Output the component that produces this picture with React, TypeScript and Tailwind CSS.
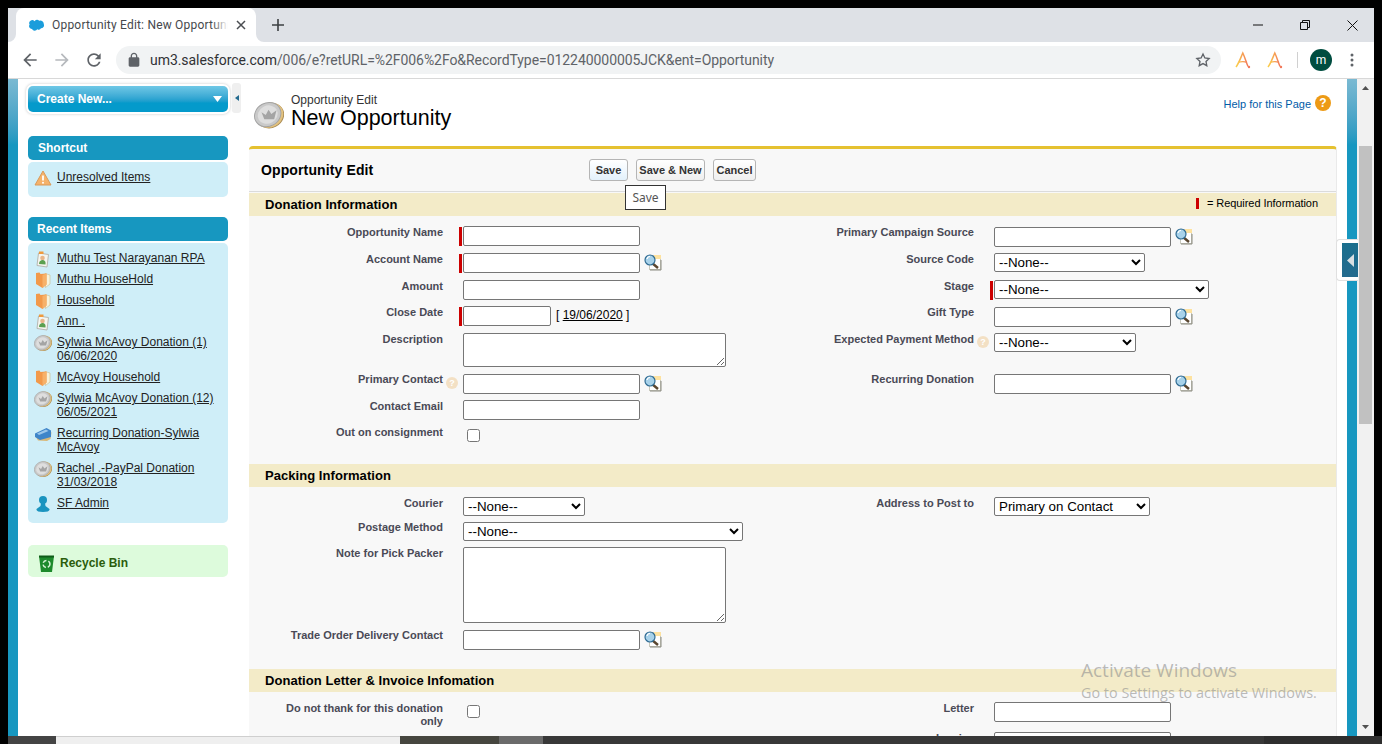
import React from "react";

const SANS = "font-['Liberation_Sans',Arial,sans-serif]";

function Lookup() {
  return (
    <svg width="18" height="17" viewBox="0 0 18 17" className="shrink-0 ml-[4px] mt-[1px]">
      <rect x="5.5" y="1.5" width="11" height="14" fill="#fff" stroke="#c8c8bc" />
      <rect x="10" y="1" width="7" height="4" fill="#fde2a0" />
      <path d="M6 16h11V6" fill="none" stroke="#8a8a80" />
      <path d="M8 9l6 5" stroke="#5a4630" strokeWidth="2.4" />
      <circle cx="6" cy="6" r="5" fill="#a8d2ea" stroke="#2f6b93" strokeWidth="1.2" />
      <path d="M3 5a3 3 0 0 1 3-2.5" stroke="#fff" strokeWidth="1.2" fill="none" />
    </svg>
  );
}

function Help({ className = "" }: { className?: string }) {
  return (
    <span className={"w-[12px] h-[12px] mt-[3px] rounded-full bg-[#f3e0c4] text-white text-[9px] font-bold leading-[12px] text-center shrink-0 " + className}>?</span>
  );
}

function Coin({ size = 18 }: { size?: number }) {
  return (
    <svg width={size} height={size} viewBox="0 0 32 32">
      <g transform="rotate(-28 16 16)">
        <ellipse cx="17" cy="17.5" rx="15" ry="13" fill="#a98a52" />
        <ellipse cx="16.5" cy="16.5" rx="15" ry="13" fill="#e3c27f" />
        <ellipse cx="15" cy="15" rx="14.5" ry="12.5" fill="#c9c9c9" stroke="#a3a3a3" />
        <ellipse cx="15" cy="15" rx="11" ry="9.5" fill="#dedede" />
      </g>
      <path d="M8 13l4.500 3 3-5.500 3 4.500 5.500-4-2.500 9.500H11z" fill="#a4a4a4" />
    </svg>
  );
}

function ContactIcon() {
  return (
    <svg width="18" height="18" viewBox="0 0 18 18">
      <path d="M4.500 3l10 1.500-1.500 12.500-10-1.500z" fill="#f5f5ef" stroke="#b7b7b0" />
      <path d="M5 1.500h4.500V4H5z" fill="#ef9a3c" />
      <circle cx="8.500" cy="8" r="2.300" fill="#e8b689" />
      <path d="M5 14c0-3 2-4 3.500-4S12 11 11.500 14.500z" fill="#5aa050" />
    </svg>
  );
}

function FolderIcon() {
  return (
    <svg width="18" height="18" viewBox="0 0 18 18">
      <path d="M11 2.500l5 1.500v9l-4.500 3.500z" fill="#f7f3dc" stroke="#c9b98c" strokeWidth="0.6" />
      <path d="M2 2l3.500-.5 1 1.500 6-.5v11L8.500 17 2 13z" fill="#f2994a" />
      <path d="M12.500 2.500v11L8.500 17V4z" fill="#f7b169" />
    </svg>
  );
}

function CardIcon() {
  return (
    <svg width="18" height="18" viewBox="0 0 18 18">
      <path d="M1 10.500L13 4.500l4.500 3-1 6.500-3.500 2-9-.5z" fill="#d9b878" />
      <path d="M1 8.500L12.500 3l4.500 2.500v6.500l-11 3L1 12z" fill="#3f85c9" />
      <path d="M3 8.500l9-4 2.500 1.500L5 10z" fill="#9cc6ea" />
    </svg>
  );
}

function PersonIcon() {
  return (
    <svg width="18" height="18" viewBox="0 0 18 18">
      <circle cx="9" cy="5" r="4" fill="#1b94bf" />
      <path d="M7 8h4l.5 3 4 3c.5 2-2 3-6.500 3S2 16 2.500 14l4-3z" fill="#1b94bf" />
    </svg>
  );
}

function Row({ h, children }: { h: string; children: React.ReactNode }) {
  return <div className={"flex shrink-0 " + h}>{children}</div>;
}

function Cell({
  side,
  label,
  req,
  help,
  up,
  children,
}: {
  side: "l" | "r";
  label?: React.ReactNode;
  req?: boolean;
  help?: boolean;
  up?: boolean;
  children?: React.ReactNode;
}) {
  return (
    <div className={"flex " + (side === "l" ? "w-[544px]" : "w-[543px]")}>
      <div className={"text-right text-[11px] leading-[13px] font-bold text-[#4a4a56] shrink-0 " + (side === "l" ? "w-[194px] " : "w-[181px] ") + (up ? "-mt-[1px]" : "")}>
        {label}
      </div>
      <div className="w-[20px] shrink-0 flex justify-end">
        {help && <Help className="mr-auto ml-[3px]" />}
        {req && <span className="w-[3px] h-[19px] mt-[1px] mr-[1px] bg-[#c00]" />}
      </div>
      <div className="flex items-start">{children}</div>
    </div>
  );
}

function TextBox({ w = "w-[177px]" }: { w?: string }) {
  return <input type="text" className={"h-[20px] bg-white border border-[#767676] rounded-[2px] " + w} />;
}

function Pick({ w, v = "--None--" }: { w: string; v?: string }) {
  return (
    <select defaultValue={v} className={"h-[19px] bg-white border border-[#767676] rounded-[2px] text-[13.33px] text-black " + w}>
      <option>{v}</option>
    </select>
  );
}

function Check({ mt }: { mt: string }) {
  return <input type="checkbox" className={"w-[13px] h-[13px] ml-[4px] " + mt} />;
}

function Section({ title, children }: { title: string; children?: React.ReactNode }) {
  return (
    <div className="h-[23px] shrink-0 bg-[#f3ebc8] pl-[16px] pr-[18px] flex items-center justify-between">
      <span className="text-[13px] font-bold text-black tracking-[0.05px]">{title}</span>
      {children}
    </div>
  );
}

function Btn({ children, w, hover }: { children: React.ReactNode; w: string; hover?: boolean }) {
  return (
    <button className={"h-[22px] border border-[#b5b5b5] rounded-[3px] text-[11px] font-bold text-[#333] bg-gradient-to-b from-white " + (hover ? "to-[#e3f1fb] " : "to-[#efefef] ") + w}>
      {children}
    </button>
  );
}

function Recent({ icon, children }: { icon: React.ReactNode; children: React.ReactNode }) {
  return (
    <div className="flex gap-[5px] mb-[7px]">
      <span className="w-[18px] h-[14px] shrink-0 flex items-start -mt-[1px]">{icon}</span>
      <a className="underline text-[12px] leading-[14px] text-[#222] w-[162px]">{children}</a>
    </div>
  );
}

function ExtA({ id }: { id: string }) {
  return (
    <svg width="18" height="18" viewBox="0 0 18 18" fill="none">
      <defs>
        <linearGradient id={id} x1="0" y1="0" x2="1" y2="0">
          <stop offset="0" stopColor="#fbd04a" />
          <stop offset="1" stopColor="#f2785a" />
        </linearGradient>
      </defs>
      <path d="M2 16C5 12 7 6 8.800 2c2 4 3.500 10 5.200 13.500" stroke={`url(#${id})`} strokeWidth="1.500" />
      <path d="M4 11.500c3 -1.200 6-1.200 9-.2" stroke={`url(#${id})`} strokeWidth="1.200" />
      <circle cx="15" cy="16" r="1.200" fill="#f2785a" />
    </svg>
  );
}

export default function App() {
  return (
    <div className={"relative w-[1382px] h-[744px] bg-black overflow-hidden flex flex-col pt-[8px] " + SANS}>
      <div className="flex-1 min-h-0 mx-[8px] flex flex-col">
        {/* tab strip */}
        <div className="h-[34px] shrink-0 bg-[#dee1e6] flex items-center text-[#3c4043]">
          <div className="relative ml-[8px] w-[240px] h-[34px] bg-white rounded-t-[8px] flex items-center font-['Roboto',sans-serif]">
            <svg width="8" height="8" viewBox="0 0 8 8" className="absolute -left-[8px] bottom-0"><path d="M8 0v8H0a8 8 0 0 0 8-8z" fill="#fff" /></svg>
            <svg width="8" height="8" viewBox="0 0 8 8" className="absolute -right-[8px] bottom-0"><path d="M0 0v8h8a8 8 0 0 1-8-8z" fill="#fff" /></svg>
            <svg width="16" height="12" viewBox="0 0 16 12" className="ml-[12px] shrink-0">
              <path d="M6.500 2.200A3 3 0 0 1 11.200 1.800 3.400 3.400 0 0 1 15.800 5.200 3 3 0 0 1 13 9.300 2.600 2.600 0 0 1 9.300 10.200 3 3 0 0 1 4 10 2.800 2.800 0 0 1 1.600 5.600 3 3 0 0 1 6.500 2.200z" fill="#1b9ddb" />
            </svg>
            <span className="ml-[8px] text-[12px] tracking-[0.2px] whitespace-nowrap overflow-hidden w-[176px] text-[#45484c]">Opportunity Edit: New Opportunity</span>
            <span className="absolute left-[196px] top-0 w-[16px] h-[34px] bg-gradient-to-r from-transparent to-white" />
            <svg width="10" height="10" viewBox="0 0 10 10" className="ml-[8px] shrink-0"><path d="M1 1l8 8M9 1l-8 8" stroke="#4a4d51" strokeWidth="1.500" /></svg>
          </div>
          <svg width="12" height="12" viewBox="0 0 12 12" className="ml-[16px] shrink-0"><path d="M6 0v12M0 6h12" stroke="#3c4043" strokeWidth="1.600" /></svg>
          <div className="ml-auto flex items-center pr-[16px] gap-[36px] text-[#222]">
            <svg width="10" height="10" viewBox="0 0 10 10"><path d="M0 5h10" stroke="#111" strokeWidth="1" /></svg>
            <svg width="10" height="10" viewBox="0 0 10 10" fill="none" className="ml-[1px]"><path d="M.5 2.500h7v7h-7zM2.500 2.500v-2h7v7h-2" stroke="#111" /></svg>
            <svg width="11" height="11" viewBox="0 0 11 11" className="ml-[1px]"><path d="M.5.500l10 10M10.500.500l-10 10" stroke="#111" /></svg>
          </div>
        </div>
        {/* toolbar */}
        <div className="h-[37px] shrink-0 bg-white border-b border-[#d8d8d8] flex items-start pt-[4px] font-['Roboto',sans-serif]">
          <div className="w-[108px] h-[28px] flex items-center shrink-0">
            <svg width="20" height="20" viewBox="0 0 24 24" className="ml-[12px]"><path fill="#5f6368" d="M20 11H7.830l5.590-5.590L12 4l-8 8 8 8 1.410-1.410L7.830 13H20v-2z" /></svg>
            <svg width="20" height="20" viewBox="0 0 24 24" className="ml-[12px]"><path fill="#b6b9bd" d="M12 4l-1.410 1.410L16.170 11H4v2h12.170l-5.580 5.590L12 20l8-8z" /></svg>
            <svg width="20" height="20" viewBox="0 0 24 24" className="ml-[12px]"><path fill="#5f6368" d="M17.650 6.350C16.200 4.900 14.210 4 12 4c-4.420 0-7.990 3.580-7.990 8s3.570 8 7.990 8c3.730 0 6.840-2.550 7.730-6h-2.080c-.82 2.330-3.040 4-5.650 4-3.310 0-6-2.690-6-6s2.690-6 6-6c1.660 0 3.140.69 4.220 1.780L13 11h7V4l-2.350 2.350z" /></svg>
          </div>
          <div className="w-[1105px] h-[28px] rounded-full bg-[#f1f3f4] flex items-center shrink-0">
            <svg width="16" height="16" viewBox="0 0 24 24" className="ml-[10px] shrink-0"><path fill="#5f6368" d="M18 8h-1V6c0-2.760-2.240-5-5-5S7 3.240 7 6v2H6c-1.100 0-2 .9-2 2v10c0 1.100.9 2 2 2h12c1.100 0 2-.9 2-2V10c0-1.100-.9-2-2-2zM9 8V6c0-1.660 1.340-3 3-3s3 1.340 3 3v2H9z" /></svg>
            <span className="ml-[8px] text-[14px] text-[#5f6368] whitespace-nowrap tracking-[-0.06px]"><span className="text-[#303134]">um3.salesforce.com</span>/006/e?retURL=%2F006%2Fo&amp;RecordType=012240000005JCK&amp;ent=Opportunity</span>
            <svg width="16" height="16" viewBox="0 0 24 24" fill="none" stroke="#5f6368" strokeWidth="2" className="ml-auto mr-[10px] shrink-0"><path d="M12 3l2.800 5.900 6.400.8-4.700 4.400 1.200 6.400L12 17.400l-5.700 3.100 1.200-6.400L2.800 9.700l6.400-.8z" /></svg>
          </div>
          <div className="flex items-center h-[28px] ml-[13px]">
            <ExtA id="a1" />
            <span className="ml-[14px]"><ExtA id="a2" /></span>
            <span className="ml-[13px] w-px h-[16px] bg-[#d0d0d0]" />
            <span className="ml-[12px] w-[22px] h-[22px] rounded-full bg-[#004d40] text-white text-[12px] flex items-center justify-center">m</span>
            <svg width="4" height="14" viewBox="0 0 4 14" className="ml-[18px]"><circle cx="2" cy="2" r="1.500" fill="#5f6368" /><circle cx="2" cy="7" r="1.500" fill="#5f6368" /><circle cx="2" cy="12" r="1.500" fill="#5f6368" /></svg>
          </div>
        </div>
        {/* page */}
        <div className="relative flex-1 min-h-0 flex bg-white overflow-hidden">
          <div className="w-[10px] shrink-0 bg-[#1797c0] bg-gradient-to-b from-[#7ab9d2] via-[#1797c0] via-[10%] to-[#1797c0]" />
          {/* sidebar */}
          <div className="w-[231px] shrink-0 pl-[10px] pr-[21px] pt-[7px]">
            <div className="h-[26px] rounded-[5px] bg-gradient-to-b from-[#6fc8e6] to-[#049acb] to-[65%] shadow-[0_0_0_2px_#fff,0_0_3px_2px_#c8c8c8] flex items-center justify-between pl-[9px] pr-[6px] text-white text-[12px] font-bold">
              <span>Create New...</span>
              <svg width="9" height="6" viewBox="0 0 9 6"><path d="M0 0h9L4.500 6z" fill="#fff" /></svg>
            </div>
            <div className="mt-[24px] h-[24px] rounded-[5px] bg-[#1797c0] text-white text-[12px] font-bold flex items-center pl-[10px]">Shortcut</div>
            <div className="mt-[2px] h-[35px] rounded-[5px] bg-[#cfeef8] flex items-start gap-[5px] pl-[6px] pt-[8px]">
              <svg width="18" height="16" viewBox="0 0 18 16"><path d="M9 1l8 14H1z" fill="#f5b26b" stroke="#d99a5a" /><path d="M9 5.500v5" stroke="#fff" strokeWidth="1.800" /><circle cx="9" cy="12.700" r="1" fill="#fff" /></svg>
              <a className="underline text-[12px] leading-[14px] text-[#222]">Unresolved Items</a>
            </div>
            <div className="mt-[20px] h-[24px] rounded-[5px] bg-[#1797c0] text-white text-[12px] font-bold flex items-center pl-[9px]">Recent Items</div>
            <div className="mt-[2px] h-[280px] rounded-[5px] bg-[#cfeef8] pl-[6px] pt-[8px]">
              <Recent icon={<ContactIcon />}>Muthu Test Narayanan RPA</Recent>
              <Recent icon={<FolderIcon />}>Muthu HouseHold</Recent>
              <Recent icon={<FolderIcon />}>Household</Recent>
              <Recent icon={<ContactIcon />}>Ann .</Recent>
              <Recent icon={<Coin />}>Sylwia McAvoy Donation (1) 06/06/2020</Recent>
              <Recent icon={<FolderIcon />}>McAvoy Household</Recent>
              <Recent icon={<Coin />}>Sylwia McAvoy Donation (12) 06/05/2021</Recent>
              <Recent icon={<CardIcon />}>Recurring Donation-Sylwia McAvoy</Recent>
              <Recent icon={<Coin />}>Rachel .-PayPal Donation 31/03/2018</Recent>
              <Recent icon={<PersonIcon />}>SF Admin</Recent>
            </div>
            <div className="mt-[22px] h-[32px] rounded-[5px] bg-[#ddfbdc] flex items-center pl-[10px] pt-[4px] gap-[5px]">
              <svg width="17" height="18" viewBox="0 0 17 18"><path d="M1 2h15l-2 16H3z" fill="#1d8a2c" /><path d="M1 1.500h15v2H1z" fill="#0e5c18" /><circle cx="8.500" cy="10" r="3.500" fill="none" stroke="#d9f3d9" strokeWidth="1.500" strokeDasharray="4 2" /></svg>
              <span className="text-[12px] font-bold text-[#2b5d0c]">Recycle Bin</span>
            </div>
          </div>
          {/* main */}
          <div className="w-[1088px] shrink-0 flex flex-col min-h-0">
            <div className="h-[67px] shrink-0 flex items-start pl-[5px] pt-[15px]">
              <span className="mt-[6px] shrink-0"><Coin size={30} /></span>
              <div className="ml-[7px]">
                <div className="text-[12px] leading-[13px] text-[#333]">Opportunity Edit</div>
                <div className="text-[21.5px] leading-[22px] text-black">New Opportunity</div>
              </div>
              <div className="ml-auto mr-[6px] flex items-center gap-[4px]">
                <span className="text-[11px] mt-[2px] text-[#015ba7]">Help for this Page</span>
                <span className="w-[16px] h-[16px] rounded-full bg-[#ed9a15] text-white text-[12px] font-bold leading-[16px] text-center">?</span>
              </div>
            </div>
            <div className="flex-1 min-h-0 flex flex-col bg-[#f8f8f8] border-t-[3px] border-r border-r-[#eaeaea] border-t-[#e5c130] rounded-t-[4px]">
              <div className="h-[43px] mb-[1px] shrink-0 border-b border-[#dbdbdb] flex items-center pl-[12px]">
                <span className="w-[328px] text-[14px] font-bold text-black tracking-[0.12px]">Opportunity Edit</span>
                <div className="flex gap-[8px]">
                  <Btn w="w-[39px]" hover>Save</Btn>
                  <Btn w="w-[69px]">Save &amp; New</Btn>
                  <Btn w="w-[43px]">Cancel</Btn>
                </div>
              </div>
              <Section title="Donation Information">
                <span className="flex items-center gap-[8px] -mt-[2px] text-[11px] tracking-[-0.05px] text-black">
                  <span className="w-[3px] h-[11px] bg-[#c00]" />= Required Information
                </span>
              </Section>
              <div className="h-[10px] shrink-0" />
              <Row h="h-[27px]">
                <Cell side="l" label="Opportunity Name" req><TextBox /></Cell>
                <Cell side="r" label="Primary Campaign Source"><span className="mt-[1px] flex"><TextBox /><Lookup /></span></Cell>
              </Row>
              <Row h="h-[27px]">
                <Cell side="l" label="Account Name" req><TextBox /><Lookup /></Cell>
                <Cell side="r" label="Source Code"><Pick w="w-[151px]" /></Cell>
              </Row>
              <Row h="h-[26px]">
                <Cell side="l" label="Amount"><TextBox /></Cell>
                <Cell side="r" label="Stage" req><Pick w="w-[215px]" /></Cell>
              </Row>
              <Row h="h-[27px]">
                <Cell side="l" label="Close Date" req>
                  <TextBox w="w-[88px]" />
                  <span className="ml-[5px] mt-[2px] text-[12px] leading-[14px] text-black whitespace-nowrap">[ <a className="underline">19/06/2020</a> ]</span>
                </Cell>
                <Cell side="r" label="Gift Type"><span className="mt-[1px] flex"><TextBox /><Lookup /></span></Cell>
              </Row>
              <Row h="h-[41px]">
                <Cell side="l" label="Description"><textarea className="w-[263px] h-[34px] bg-white border border-[#767676] rounded-[2px]" /></Cell>
                <Cell side="r" label="Expected Payment Method" help><Pick w="w-[142px]" /></Cell>
              </Row>
              <Row h="h-[26px]">
                <Cell side="l" label="Primary Contact" help up><TextBox /><Lookup /></Cell>
                <Cell side="r" label="Recurring Donation" up><TextBox /><Lookup /></Cell>
              </Row>
              <Row h="h-[27px]">
                <Cell side="l" label="Contact Email"><TextBox /></Cell>
                <Cell side="r" />
              </Row>
              <Row h="h-[37px]">
                <Cell side="l" label="Out on consignment" up><Check mt="mt-[2px]" /></Cell>
                <Cell side="r" />
              </Row>
              <Section title="Packing Information" />
              <div className="h-[10px] shrink-0" />
              <Row h="h-[25px]">
                <Cell side="l" label="Courier"><Pick w="w-[122px]" /></Cell>
                <Cell side="r" label="Address to Post to"><Pick w="w-[156px]" v="Primary on Contact" /></Cell>
              </Row>
              <Row h="h-[25px]">
                <Cell side="l" label="Postage Method" up><Pick w="w-[280px]" /></Cell>
                <Cell side="r" />
              </Row>
              <Row h="h-[83px]">
                <Cell side="l" label="Note for Pick Packer"><textarea className="w-[263px] h-[76px] bg-white border border-[#767676] rounded-[2px]" /></Cell>
                <Cell side="r" />
              </Row>
              <Row h="h-[39px]">
                <Cell side="l" label="Trade Order Delivery Contact" up><TextBox /><Lookup /></Cell>
                <Cell side="r" />
              </Row>
              <Section title="Donation Letter & Invoice Infomation" />
              <div className="h-[10px] shrink-0" />
              <Row h="h-[30px]">
                <Cell side="l" label={<>Do not thank for this donation<br />only</>}><Check mt="mt-[3px]" /></Cell>
                <Cell side="r" label="Letter"><TextBox /></Cell>
              </Row>
              <Row h="h-[27px]">
                <Cell side="l" />
                <Cell side="r" label="Invoice"><TextBox /></Cell>
              </Row>
            </div>
          </div>
          <div className="w-[10px] shrink-0" />
          <div className="w-[10px] shrink-0 bg-gradient-to-b from-[#7ab9d2] via-[#1797c0] via-[10%] to-[#1797c0]" />
          {/* scrollbar */}
          <div className="w-[17px] shrink-0 bg-[#f1f1f1] flex flex-col items-center pt-[7px]">
            <svg width="7" height="4" viewBox="0 0 7 4"><path d="M3.500 0L7 4H0z" fill="#505050" /></svg>
            <div className="w-[13px] h-[278px] bg-[#c1c1c1] mt-[56px]" />
            <svg width="7" height="4" viewBox="0 0 7 4" className="mt-auto mb-[7px]"><path d="M0 0h7L3.500 4z" fill="#505050" /></svg>
          </div>
          {/* sidebar collapse */}
          <div className="absolute left-[224px] top-[4px] w-[9px] h-[30px] rounded-[3px] bg-[#efefef] flex items-center justify-center">
            <svg width="4" height="6" viewBox="0 0 4 6"><path d="M4 0v6L0 3z" fill="#236a8f" /></svg>
          </div>
          {/* side handle */}
          <div className="absolute left-[1328px] top-[160px] w-[22px] h-[42px] bg-white rounded-l-[4px] border-l border-y border-[#e0e0e0] flex items-center justify-end">
            <div className="w-[16px] h-[34px] bg-gradient-to-b from-[#1a6f8e] to-[#246b8e] flex items-center justify-center">
              <svg width="7" height="13" viewBox="0 0 7 13"><path d="M7 0v13L0 6.500z" fill="#d9dfe2" /></svg>
            </div>
          </div>
        </div>
      </div>
      {/* taskbar */}
      <div className="h-[8px] shrink-0 ml-[8px] bg-[#2e2e2e] flex overflow-hidden">
        <div className="w-[48px] bg-[#444]" />
        <div className="w-[344px] bg-[#efefef] border-t border-[#cfcfcf]" />
        <div className="w-[99px] bg-[#46463f]" />
        <div className="w-[44px] bg-[#6b6b6b]" />
        <div className="w-[721px] bg-[#383838]" />
        <div className="text-white text-[12px] leading-[16px] pt-[5px] font-['Noto_Sans',sans-serif] whitespace-nowrap">12:30 PM</div>
      </div>
      {/* tooltip */}
      <div className="absolute left-[625px] top-[185px] w-[41px] h-[25px] bg-white border border-[#333] text-[12px] text-[#555] flex items-center justify-center font-['Noto_Sans',sans-serif]">Save</div>
      {/* watermark */}
      <div className="absolute left-[1081px] top-[657px] text-[#8f8f8f]/60 font-['Open_Sans',sans-serif] pointer-events-none">
        <div className="text-[19px] leading-[26px]">Activate Windows</div>
        <div className="text-[14.4px] leading-[19px] whitespace-nowrap">Go to Settings to activate Windows.</div>
      </div>
    </div>
  );
}
